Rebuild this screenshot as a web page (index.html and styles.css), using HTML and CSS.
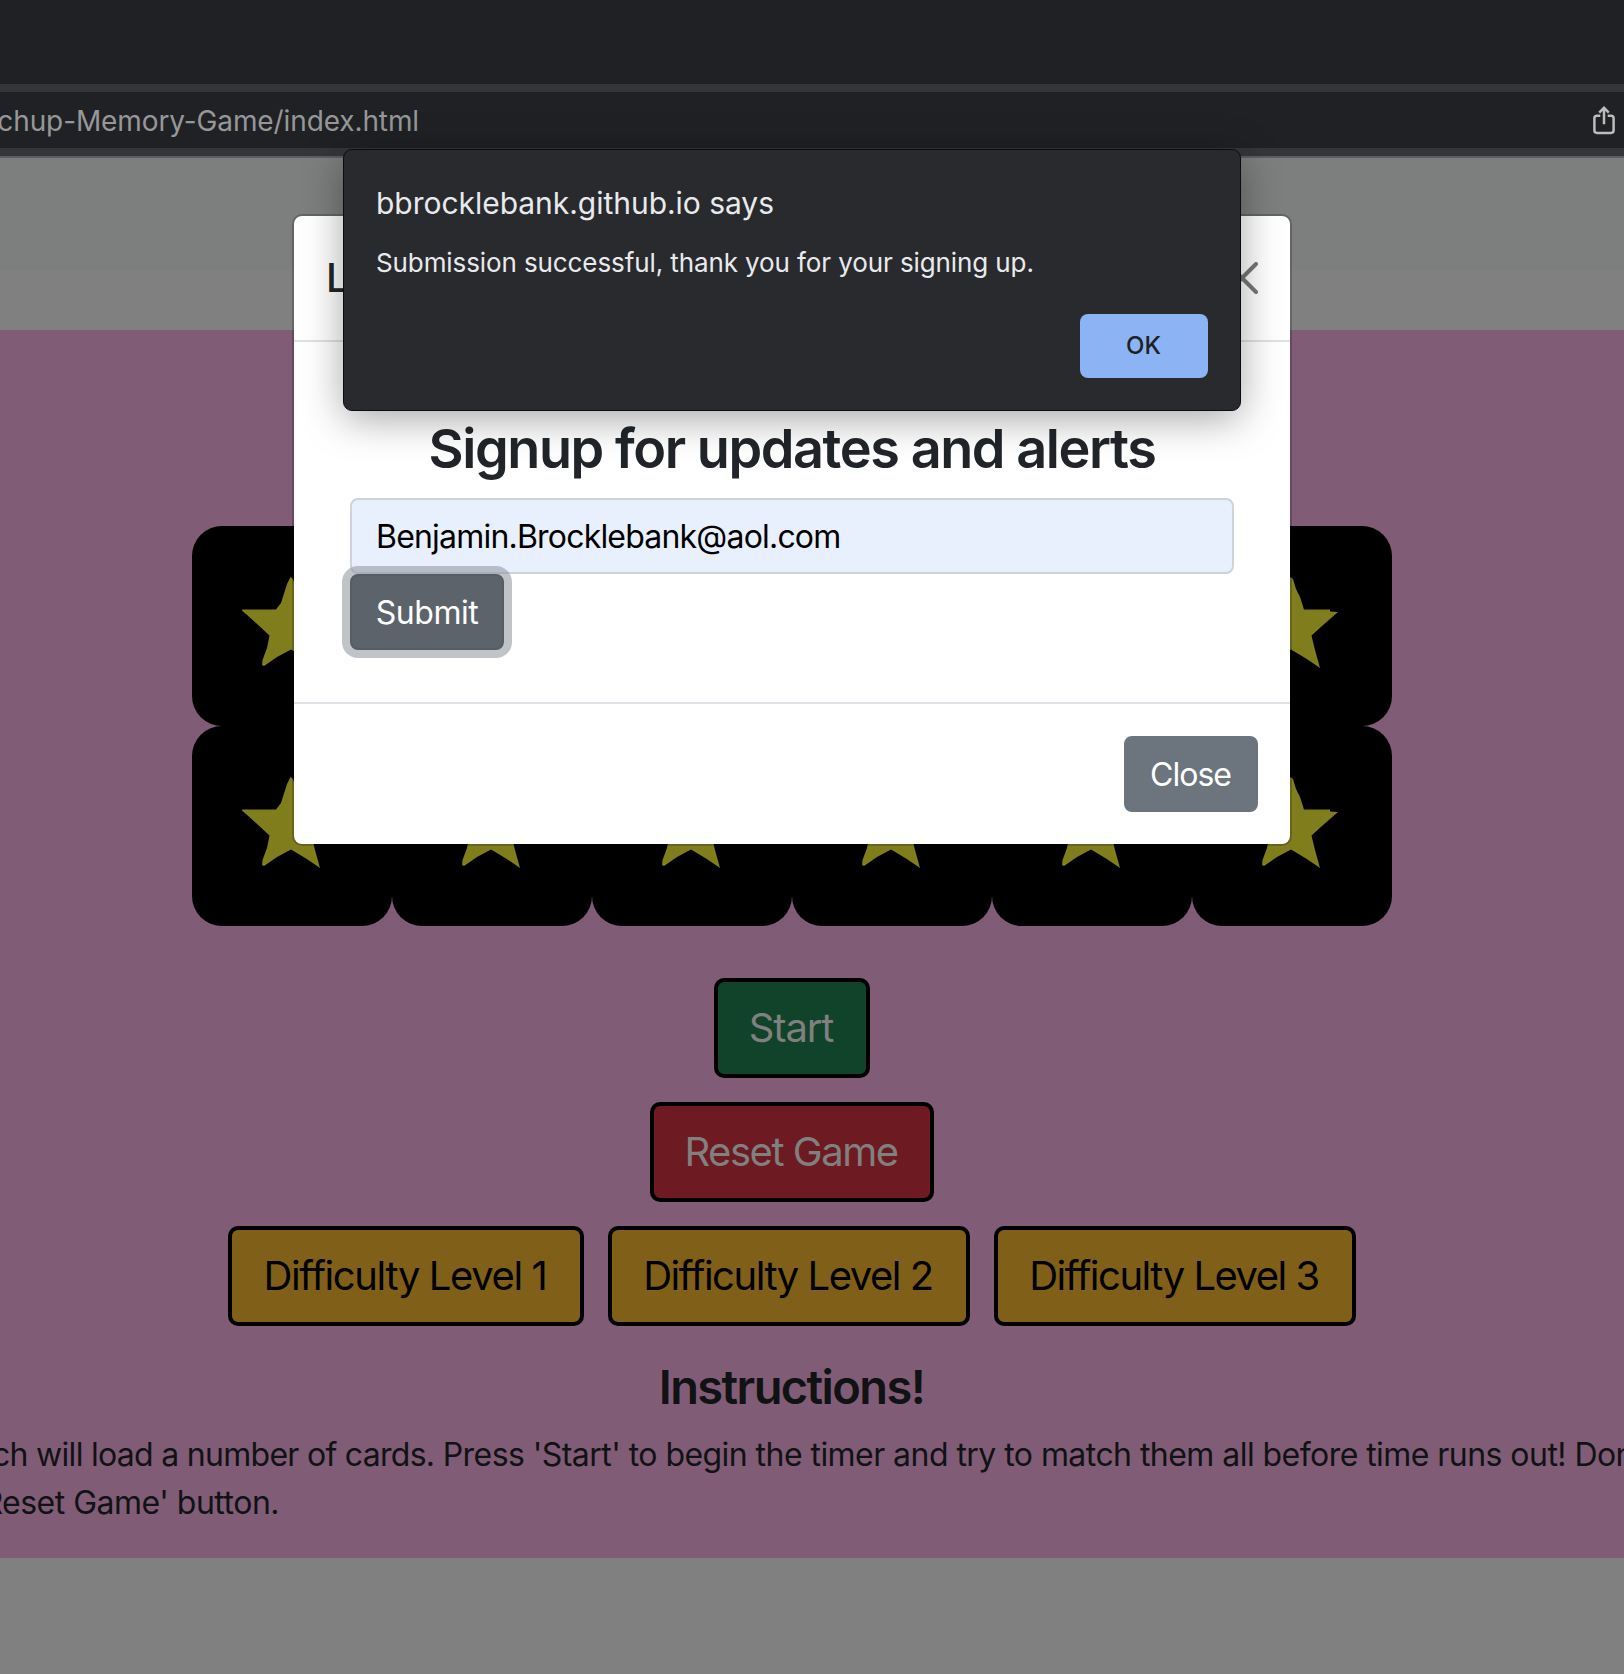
FILE: index.html
```html
<!DOCTYPE html>
<html lang="en">
<head>
<meta charset="utf-8">
<title>Matchup Memory Game</title>
<link rel="stylesheet" href="styles.css">
</head>
<body>
<svg class="defs" aria-hidden="true">
  <symbol id="star" viewBox="0 0 200 200">
    <path d="M98.500 51 L101 53 L104 63 L108 71 L112 83.500 L138 83.500 L138 85.500 L146 86 L130 100 L119.500 109.500 L123 124 L128 142 L114 132.500 L99 123.500 L85 131 L72 140 L70 139 L70.500 134 L75 122 L77.500 109.500 L64 97 L50 84.500 L50 83.500 L84 83.500 L89 77 L95 58 Z"/>
  </symbol>
</svg>

<div class="tabstrip"></div>
<div class="toolbar">
  <div class="url"><span>chup-Memory-Game/index.html</span></div>
  <svg class="share" viewBox="0 0 24 30" fill="none" stroke="#bcbcbc" stroke-width="2.500">
    <path d="M8.300 10.800 H5 Q2.400 10.800 2.400 13.300 V25.300 Q2.400 27.900 5 27.900 H19 Q21.600 27.900 21.600 25.300 V13.300 Q21.600 10.800 19 10.800 H15.700"/>
    <path d="M12 19.300 V3.800 M7.200 7.600 L12 2.800 L16.800 7.600"/>
  </svg>
</div>

<header class="navbar"></header>
<div class="band"></div>
<main class="game">
  <div class="board">
    <div class="card"><svg><use href="#star"/></svg></div><div class="card"><svg><use href="#star"/></svg></div><div class="card"><svg><use href="#star"/></svg></div><div class="card"><svg><use href="#star"/></svg></div><div class="card"><svg><use href="#star"/></svg></div><div class="card"><svg><use href="#star"/></svg></div>
    <div class="card"><svg><use href="#star"/></svg></div><div class="card"><svg><use href="#star"/></svg></div><div class="card"><svg><use href="#star"/></svg></div><div class="card"><svg><use href="#star"/></svg></div><div class="card"><svg><use href="#star"/></svg></div><div class="card"><svg><use href="#star"/></svg></div>
  </div>
  <div class="controls">
    <div class="row"><button class="btn start">Start</button></div>
    <div class="row"><button class="btn reset">Reset Game</button></div>
    <div class="row">
      <button class="btn level level-one">Difficulty Level 1</button>
      <button class="btn level">Difficulty Level 2</button>
      <button class="btn level level-three">Difficulty Level 3</button>
    </div>
  </div>
  <h2 class="instructions-title">Instructions!</h2>
  <div class="instructions">
    <p class="line"><span class="lead">ch will load a number of cards. </span>Press 'Start' to begin the timer and try to match them all before time runs out! Don't</p>
    <p class="line line-end"><span>Reset Game' button.</span></p>
  </div>
</main>

<section class="modal">
  <div class="modal-header">
    <h5 class="modal-title">L</h5>
    <svg class="close-x" viewBox="0 0 32 32" stroke="#777" stroke-width="4" stroke-linecap="round"><path d="M2 2 L30 30 M30 2 L2 30"/></svg>
  </div>
  <div class="modal-body">
    <h3 class="signup">Signup for updates and alerts</h3>
    <div class="input">Benjamin.Brocklebank@aol.com</div>
    <button class="mbtn submit">Submit</button>
  </div>
  <div class="modal-footer"><button class="mbtn close">Close</button></div>
</section>

<section class="alert">
  <h1 class="alert-title">bbrocklebank.github.io says</h1>
  <p class="alert-text">Submission successful, thank you for your signing up.</p>
  <button class="ok">OK</button>
</section>
</body>
</html>
```
FILE: styles.css
```css
* { box-sizing: border-box; }
body {
  margin: 0;
  position: relative;
  width: 1624px;
  height: 1674px;
  overflow: hidden;
  background: #808080;
  font-family: Inter, "Liberation Sans", sans-serif;
  font-size: 32px;
}
h1, h2, h3, h5, p { margin: 0; }
button { font-family: inherit; margin: 0; padding: 0; white-space: nowrap; }
.defs { display: none; }

/* browser chrome */
.tabstrip { height: 84px; background: #202124; }
.toolbar {
  height: 74px;
  display: flex;
  align-items: center;
  background: #202124;
  border-top: 8px solid #35363a;
  border-bottom: 2px solid #5d5e61;
  box-shadow: inset 0 -8px #35363a;
  padding-bottom: 8px;
}
.url {
  width: 419px;
  padding-top: 1px;
  display: flex;
  justify-content: flex-end;
  white-space: nowrap;
  font-size: 28px;
  letter-spacing: -0.11px;
  color: #969798;
}
.share { width: 24px; height: 30px; margin-left: 1173px; flex: none; }

/* dimmed page */
.navbar { height: 112px; background: #7c7f7d; }
.band { height: 60px; background: #808080; }
.game {
  height: 1228px;
  background: #815c77;
  padding-top: 196px;
  overflow: hidden;
}
.board {
  width: 1200px;
  margin-left: 192px;
  display: grid;
  grid-template-columns: repeat(6, 200px);
  grid-auto-rows: 200px;
}
.card { background: #000; border-radius: 30px; }
.card svg { display: block; width: 200px; height: 200px; fill: #807d1c; }
.controls {
  width: 1584px;
  margin-top: 52px;
  display: flex;
  flex-direction: column;
  gap: 24px;
}
.row { display: flex; justify-content: center; gap: 24px; }
.btn {
  height: 100px;
  padding: 0 2px 2px 0;
  border: 4px solid #000;
  border-radius: 10px;
  font-size: 40px;
  letter-spacing: -1.48px;
  color: #808080;
}
.start { width: 156px; background: #11422a; letter-spacing: -1.15px; }
.reset { width: 284px; background: #6e1a22; }
.level { width: 362px; background: #805f18; color: #000; }
.level-one { width: 356px; letter-spacing: -1.4px; }
.level-three { letter-spacing: -1.5px; }
.instructions-title {
  width: 1583px;
  margin-top: 32px;
  text-align: center;
  font-size: 47px;
  line-height: 58px;
  font-weight: 600;
  letter-spacing: -1.6px;
  color: #101214;
}
.instructions { margin-top: 15px; color: #101214; letter-spacing: -0.55px; }
.line { height: 48px; line-height: 48px; white-space: nowrap; margin-left: -8px; }
.lead { letter-spacing: -0.71px; }
.line-end { width: 287px; display: flex; justify-content: flex-end; letter-spacing: -0.5px; }

/* signup modal */
.modal {
  position: absolute;
  left: 292px;
  top: 214px;
  width: 1000px;
  height: 632px;
  border: 2px solid rgba(0, 0, 0, .2);
  border-radius: 10px;
  background: #fff;
  background-clip: padding-box;
  color: #212529;
}
.modal-header {
  height: 126px;
  padding: 0 32px;
  display: flex;
  align-items: center;
  justify-content: space-between;
  border-bottom: 2px solid #dee2e6;
}
.modal-title { font-size: 40px; line-height: 60px; font-weight: 500; }
.close-x { width: 32px; height: 32px; }
.modal-body { height: 360px; padding: 73px 56px 0; }
.signup {
  text-align: center;
  font-size: 54px;
  line-height: 68px;
  font-weight: 600;
  letter-spacing: -1.43px;
  white-space: nowrap;
}
.input {
  height: 76px;
  margin-top: 15px;
  padding: 1px 24px 0;
  line-height: 72px;
  border: 2px solid #ced4da;
  border-radius: 8px;
  background: #e8f0fe;
  color: #000;
  letter-spacing: -0.8px;
}
.mbtn {
  display: block;
  height: 76px;
  border: 2px solid #6c757d;
  border-radius: 8px;
  background: #6c757d;
  color: #fff;
  font-size: 32px;
}
.submit {
  width: 154px;
  background: #5c636a;
  border-color: #565e64;
  letter-spacing: -0.45px;
  box-shadow: 0 0 0 8px rgba(130, 138, 145, .5);
}
.modal-footer {
  height: 142px;
  padding: 32px;
  display: flex;
  justify-content: flex-end;
  border-top: 2px solid #dee2e6;
}
.close { width: 134px; letter-spacing: -1px; padding-right: 1px; }

/* browser alert */
.alert {
  position: absolute;
  left: 343px;
  top: 149px;
  width: 898px;
  height: 262px;
  padding: 34px 32px 32px;
  display: flex;
  flex-direction: column;
  border: 1px solid #0c0c0e;
  border-radius: 9px;
  background: #292a2d;
  color: #e8eaed;
  box-shadow: 0 8px 40px rgba(0, 0, 0, .35);
}
.alert-title { font-size: 30px; line-height: 38px; font-weight: 400; letter-spacing: -0.03px; }
.alert-text { margin-top: 24px; font-size: 26px; line-height: 34px; letter-spacing: -0.1px; }
.ok {
  width: 128px;
  height: 64px;
  margin-top: auto;
  padding: 0 1px 1px 0;
  align-self: flex-end;
  border: 0;
  border-radius: 8px;
  background: #8cb4f5;
  color: #202124;
  font-size: 24px;
  font-weight: 500;
  letter-spacing: 0;
}
```
